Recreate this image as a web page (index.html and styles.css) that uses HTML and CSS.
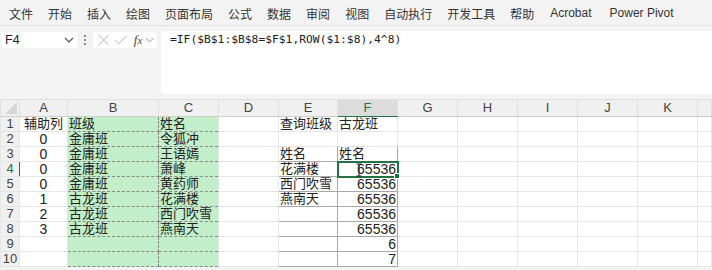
FILE: index.html
```html
<!DOCTYPE html>
<html lang="zh-CN">
<head>
    <meta charset="UTF-8">
    <title>Excel - 查询班级</title>
    <link rel="stylesheet" href="styles.css">
</head>
<body>
    <div class="ribbon">
        <span class="tab">文件</span>
        <span class="tab">开始</span>
        <span class="tab">插入</span>
        <span class="tab">绘图</span>
        <span class="tab">页面布局</span>
        <span class="tab">公式</span>
        <span class="tab">数据</span>
        <span class="tab">审阅</span>
        <span class="tab">视图</span>
        <span class="tab">自动执行</span>
        <span class="tab">开发工具</span>
        <span class="tab">帮助</span>
        <span class="tab">Acrobat</span>
        <span class="tab">Power Pivot</span>
    </div>

    <div class="formula-bar">
        <div class="name-box">
            <span>F4</span>
            <svg width="10" height="6" viewBox="0 0 10 6"><path d="M1 1l4 4 4-4" fill="none" stroke="#555" stroke-width="1.2"/></svg>
        </div>
        <div class="more-dots">
            <svg width="4" height="12" viewBox="0 0 4 12"><circle cx="2" cy="2" r="1" fill="#666"/><circle cx="2" cy="6" r="1" fill="#666"/><circle cx="2" cy="10" r="1" fill="#666"/></svg>
        </div>
        <div class="fx-box">
            <svg width="14" height="14" viewBox="0 0 14 14"><path d="M2 2l10 10M12 2L2 12" stroke="#c8c8c8" stroke-width="1.1"/></svg>
            <svg width="16" height="14" viewBox="0 0 16 14"><path d="M2 7l4 4 8-8" fill="none" stroke="#c8c8c8" stroke-width="1.1"/></svg>
            <span class="fx"><i>f</i><i class="x">x</i></span>
            <svg width="10" height="6" viewBox="0 0 10 6"><path d="M1 1l4 4 4-4" fill="none" stroke="#999" stroke-width="1"/></svg>
        </div>
        <div class="formula">=IF($B$1:$B$8=$F$1,ROW($1:$8),4^8)</div>
    </div>

    <div class="sheet">
        <table class="grid">
            <colgroup>
                <col style="width:19px"><col style="width:48px"><col style="width:91px"><col style="width:60px">
                <col style="width:60px"><col style="width:59px"><col style="width:60px"><col style="width:60px">
                <col style="width:60px"><col style="width:60px"><col style="width:60px"><col style="width:60px"><col>
            </colgroup>
            <tr class="head">
                <th class="corner"><span class="tri"></span></th>
                <th>A</th><th>B</th><th>C</th><th>D</th><th>E</th><th class="sel">F</th><th>G</th><th>H</th><th>I</th><th>J</th><th>K</th><th></th>
            </tr>
            <tr>
                <th class="rh">1</th>
                <td class="a c">辅助列</td><td class="g">班级</td><td class="g">姓名</td><td></td><td>查询班级</td><td>古龙班</td><td></td><td></td><td></td><td></td><td></td><td></td>
            </tr>
            <tr>
                <th class="rh">2</th>
                <td class="a c n">0</td><td class="g">金庸班</td><td class="g">令狐冲</td><td></td><td></td><td></td><td></td><td></td><td></td><td></td><td></td><td></td>
            </tr>
            <tr>
                <th class="rh">3</th>
                <td class="a c n">0</td><td class="g">金庸班</td><td class="g">王语嫣</td><td></td><td class="box">姓名</td><td class="box">姓名</td><td></td><td></td><td></td><td></td><td></td><td></td>
            </tr>
            <tr>
                <th class="rh sel">4</th>
                <td class="a c n">0</td><td class="g">金庸班</td><td class="g">萧峰</td><td></td><td class="box">花满楼</td>
                <td class="box r n active">65536<span class="handle"></span>
                    <svg class="ibeam" width="6" height="14" viewBox="0 0 6 14"><path d="M0.5 1h5M0.5 13h5M3 1v12" fill="none" stroke="#222" stroke-width="1"/></svg>
                </td>
                <td></td><td></td><td></td><td></td><td></td><td></td>
            </tr>
            <tr>
                <th class="rh">5</th>
                <td class="a c n">0</td><td class="g">金庸班</td><td class="g">黄药师</td><td></td><td class="box">西门吹雪</td><td class="box r n">65536</td><td></td><td></td><td></td><td></td><td></td><td></td>
            </tr>
            <tr>
                <th class="rh">6</th>
                <td class="a c n">1</td><td class="g">古龙班</td><td class="g">花满楼</td><td></td><td class="box">燕南天</td><td class="box r n">65536</td><td></td><td></td><td></td><td></td><td></td><td></td>
            </tr>
            <tr>
                <th class="rh">7</th>
                <td class="a c n">2</td><td class="g">古龙班</td><td class="g">西门吹雪</td><td></td><td class="box"></td><td class="box r n">65536</td><td></td><td></td><td></td><td></td><td></td><td></td>
            </tr>
            <tr>
                <th class="rh">8</th>
                <td class="a c n">3</td><td class="g">古龙班</td><td class="g">燕南天</td><td></td><td class="box"></td><td class="box r n">65536</td><td></td><td></td><td></td><td></td><td></td><td></td>
            </tr>
            <tr>
                <th class="rh">9</th>
                <td class="a"></td><td class="g"></td><td class="g"></td><td></td><td class="box"></td><td class="box r n">6</td><td></td><td></td><td></td><td></td><td></td><td></td>
            </tr>
            <tr>
                <th class="rh">10</th>
                <td class="a"></td><td class="g"></td><td class="g"></td><td></td><td class="box"></td><td class="box r n">7</td><td></td><td></td><td></td><td></td><td></td><td></td>
            </tr>
        </table>
    </div>
</body>
</html>
```

FILE: styles.css
```css
body {
    margin: 0;
    width: 712px;
    height: 270px;
    overflow: hidden;
    background-color: #f3f3f3;
    font-family: "Liberation Sans", "Noto Sans CJK SC", sans-serif;
    color: #222;
}
.ribbon {
    display: flex;
    align-items: center;
    height: 24px;
    padding-left: 9px;
    padding-top: 1px;
    border-bottom: 1px solid #e2e2e2;
    font-size: 12px;
    color: #333;
}
.tab {
    margin-right: 15px;
}
.tab:nth-child(13) {
    margin-left: 1px;
    margin-right: 18px;
}
.formula-bar {
    display: flex;
    align-items: flex-start;
    height: 68px;
    padding: 5px 0 0 2px;
}
.name-box {
    display: flex;
    align-items: center;
    justify-content: space-between;
    width: 69px;
    height: 16px;
    margin-top: 1px;
    padding: 0 4px 0 3px;
    background-color: #fff;
    border-radius: 3px;
    font-size: 12.5px;
    color: #222;
}
.more-dots {
    display: flex;
    align-items: center;
    height: 18px;
    margin: 0 6px 0 5px;
}
.fx-box {
    display: flex;
    align-items: center;
    gap: 3px;
    width: 58px;
    height: 16px;
    margin-top: 1px;
    padding: 0 2px 0 4px;
    background-color: #fff;
    border-radius: 3px;
}
.fx {
    font-family: "Liberation Serif", serif;
    font-size: 13px;
    color: #444;
    margin-left: 2px;
}
.fx .x {
    font-size: 11px;
}
.formula {
    flex: 1;
    height: 61px;
    margin-left: 4px;
    padding: 2px 0 0 9px;
    background-color: #fff;
    border-radius: 3px 0 0 3px;
    font-family: "DejaVu Sans Mono", monospace;
    font-size: 11.3px;
    color: #222;
}
.sheet {
    background-color: #fff;
}
.grid {
    border-collapse: collapse;
    table-layout: fixed;
    width: 712px;
    font-size: 13px;
}
.grid th,
.grid td {
    height: 14px;
    padding: 0 1px;
    line-height: 14px;
    white-space: nowrap;
    overflow: visible;
    border: 1px solid #e6e6e6;
}
.grid td.n {
    font-size: 14px;
}
.head th {
    height: 16px;
    background-color: #f0f0f0;
    border-color: #e0e0e0;
    border-bottom: 1px solid #cfcfcf;
    font-weight: normal;
    font-size: 13px;
    color: #444;
}
.head th.sel {
    background-color: #dcdcdc;
    color: #217346;
    border-bottom: 1px solid #217346;
}
.corner {
    position: relative;
}
.tri {
    position: absolute;
    right: 2px;
    bottom: 2px;
    width: 0;
    height: 0;
    border-left: 12px solid transparent;
    border-bottom: 12px solid #d6d6d6;
}
.rh {
    background-color: #f0f0f0;
    border-color: #e0e0e0;
    font-weight: normal;
    color: #444;
    text-align: center;
}
.grid th.rh {
    font-size: 13px;
}
.rh.sel {
    color: #217346;
    border-right: 1px solid #217346;
}
.a {
    border-color: #d4d4d4;
}
.c {
    text-align: center;
}
.r {
    text-align: right;
}
.g {
    background-color: #c2eec9;
}
.grid td.g {
    border: 1px dashed #8a8a8a;
}
.grid td.box {
    border: 1px solid #a8a8a8;
}
.active {
    position: relative;
    outline: 2px solid #217346;
    outline-offset: -1px;
}
.handle {
    position: absolute;
    right: -3px;
    bottom: -3px;
    width: 4px;
    height: 4px;
    background-color: #217346;
    border: 1px solid #fff;
}
.ibeam {
    position: absolute;
    left: 18px;
    top: 1px;
}
```
